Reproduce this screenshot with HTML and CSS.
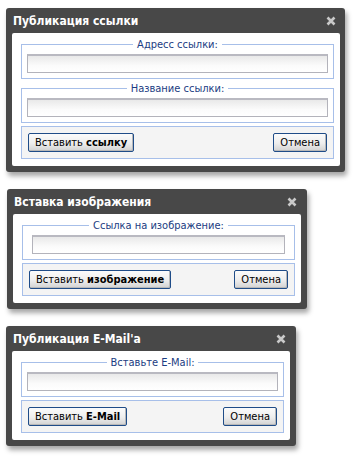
FILE: index.html
```html
<!DOCTYPE html>
<html lang="ru">
<head>
    <meta charset="UTF-8">
    <meta name="viewport" content="width=device-width, initial-scale=1.0">
    <title>Диалоги редактора</title>
    <link rel="stylesheet" href="styles.css">
</head>
<body>
    <!-- Публикация ссылки -->
    <div class="dialog dialog-link">
        <div class="dialog-title">
            <span>Публикация ссылки</span>
            <svg class="close" width="10" height="10" viewBox="0 0 10 10"><path d="M1.5 1.5 L8.5 8.5 M8.5 1.5 L1.5 8.5" /></svg>
        </div>
        <div class="dialog-body">
            <fieldset class="field">
                <legend>Адресс ссылки:</legend>
                <input type="text" class="text-input">
            </fieldset>
            <fieldset class="field">
                <legend>Название ссылки:</legend>
                <input type="text" class="text-input">
            </fieldset>
            <fieldset class="buttons">
                <button class="btn">Вставить <b>ссылку</b></button>
                <button class="btn">Отмена</button>
            </fieldset>
        </div>
    </div>

    <!-- Вставка изображения -->
    <div class="dialog dialog-image">
        <div class="dialog-title">
            <span>Вставка изображения</span>
            <svg class="close" width="10" height="10" viewBox="0 0 10 10"><path d="M1.5 1.5 L8.5 8.5 M8.5 1.5 L1.5 8.5" /></svg>
        </div>
        <div class="dialog-body">
            <fieldset class="field">
                <legend>Ссылка на изображение:</legend>
                <input type="text" class="text-input short">
            </fieldset>
            <fieldset class="buttons">
                <button class="btn">Вставить <b>изображение</b></button>
                <button class="btn">Отмена</button>
            </fieldset>
        </div>
    </div>

    <!-- Публикация E-Mail'а -->
    <div class="dialog dialog-email">
        <div class="dialog-title">
            <span>Публикация E-Mail'а</span>
            <svg class="close" width="10" height="10" viewBox="0 0 10 10"><path d="M1.5 1.5 L8.5 8.5 M8.5 1.5 L1.5 8.5" /></svg>
        </div>
        <div class="dialog-body">
            <fieldset class="field">
                <legend>Вставьте E-Mail:</legend>
                <input type="text" class="text-input">
            </fieldset>
            <fieldset class="buttons">
                <button class="btn">Вставить <b>E-Mail</b></button>
                <button class="btn">Отмена</button>
            </fieldset>
        </div>
    </div>
</body>
</html>
```

FILE: styles.css
```css
body {
    margin: 0;
    padding: 8px 0 0 6px;
    background: #fff;
    font-family: 'DejaVu Sans Condensed', 'DejaVu Sans', sans-serif;
    font-size: 11px;
    color: #000;
}

.dialog {
    background-color: #484848;
    border-radius: 3px;
    padding: 0 6px 6px 6px;
    box-shadow: 2px 4px 5px rgba(0, 0, 0, 0.35);
    box-sizing: border-box;
    margin-bottom: 17px;
}

.dialog-link {
    width: 339px;
    padding-right: 5px;
}

.dialog-image {
    width: 300px;
    margin-left: 1px;
}

.dialog-email {
    width: 290px;
}

.dialog-title {
    height: 25px;
    display: flex;
    align-items: center;
    justify-content: space-between;
    padding: 0 4px 0 1px;
    color: #fff;
    font-weight: bold;
    font-size: 12px;
}

.close path {
    stroke: #c9c9c9;
    stroke-width: 2.6;
    fill: none;
}

.dialog-body {
    background: #fff;
    border-radius: 2px;
    padding: 5px 6px 7px 9px;
}

fieldset {
    margin: 0;
    border: 1px solid #a7bfe9;
    min-width: 0;
}

.field {
    padding: 3px 5px 5px 5px;
}

.field + .field {
    margin-top: 3px;
}

legend {
    margin: 0 auto;
    padding: 0 4px;
    line-height: 13px;
    color: #1b3c82;
}

.text-input {
    display: block;
    width: 100%;
    height: 19px;
    box-sizing: border-box;
    border: 1px solid #b3b3bb;
    border-width: 2px 1px 1px 1px;
    border-color: #b9b9c1 #b3b3bb #b3b3bb #b3b3bb;
    background: linear-gradient(#e9e9e9, #fbfbfb 60%, #fff);
    margin: 0;
    padding: 0 3px;
    font-family: inherit;
    font-size: 11px;
}

.text-input.short {
    width: 253px;
    margin: 0 auto;
}

.buttons {
    margin-top: 3px;
    padding: 6px;
    background: #f4f4f4;
    display: flex;
    justify-content: space-between;
}

.btn {
    height: 19px;
    padding: 0 6px;
    border: 1px solid #1f4c88;
    border-radius: 2px;
    background: linear-gradient(#fbfbfb, #ededed 55%, #d2d2d2);
    box-shadow: inset -1px -1px 0 #b8b8b8;
    font-family: inherit;
    font-size: 11px;
    color: #000;
    line-height: 15px;
}

.btn b {
    font-weight: bold;
}
```
